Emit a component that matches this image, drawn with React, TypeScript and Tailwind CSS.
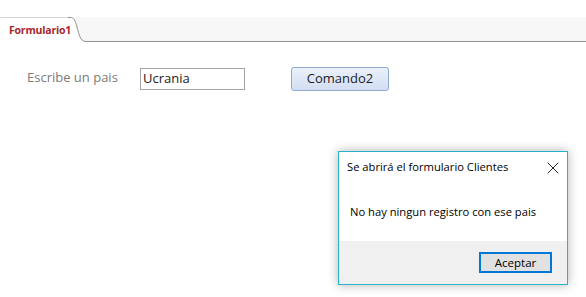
import { X } from 'lucide-react'

const ui = { fontFamily: '"Segoe UI", "Open Sans", "Noto Sans", sans-serif' }

export default function App() {
  return (
    <div className="relative w-[586px] h-[297px] bg-white overflow-hidden" style={ui}>
      <div className="h-[17px]" />
      {/* tab strip */}
      <div className="flex h-[25px] bg-[#f7f7f7]">
        <div className="flex items-center pl-[9px] w-[68px] bg-white border-t border-[#d4d4d4] rounded-tl-[2px] overflow-visible">
          <span className="relative z-10 text-[10.5px] font-bold text-[#a4262c] leading-none whitespace-nowrap tracking-[-0.2px]">Formulario1</span>
        </div>
        <svg width="20" height="25" viewBox="0 0 20 25" className="shrink-0">
          <path d="M0 0.5 H2 C6 0.5 7 3 9 10 C11 17 12 24.5 18 24.5 H20 V25 H0 Z" fill="#ffffff" />
          <path d="M0 0.5 H2 C6 0.5 7 3 9 10 C11 17 12 24.5 18 24.5 H20" fill="none" stroke="#8f8f8f" strokeWidth="1" />
        </svg>
        <div className="flex-1 border-b border-[#8f8f8f]" />
      </div>

      {/* form body */}
      <div className="flex items-center pt-[25px] pl-[27px]">
        <span className="w-[113px] text-[13px] text-[#7b7b7b] -mt-[3px]">Escribe un pais</span>
        <div className="w-[105px] h-[22px] border border-[#a5a5a5] flex items-center px-[2px] text-[13px] text-[#222]">
          Ucrania
        </div>
        <button className="ml-[46px] w-[98px] h-[24px] rounded-[3px] border border-[#8eaad2] bg-gradient-to-b from-[#eaf1fb] to-[#d2def2] text-[13px] text-[#1e1e1e] flex items-center justify-center">
          Comando2
        </button>
      </div>

      {/* message box */}
      <div className="absolute left-[338px] top-[151px] w-[230px] h-[134px] border border-[#27b4c9] bg-white shadow-[0_0_10px_rgba(0,0,0,0.3)] flex flex-col">
        <div className="flex items-center justify-between h-[30px] pl-[8px] pr-[4px] pt-[1px]">
          <span className="text-[11.2px] text-black">Se abrirá el formulario Clientes</span>
          <X className="w-[20px] h-[20px] text-[#111]" strokeWidth={1.1} />
        </div>
        <div className="flex-1 flex items-center pl-[11px] pt-[2px] text-[11.2px] text-black">
          No hay ningun registro con ese pais
        </div>
        <div className="h-[43px] bg-[#f0f0f0] flex items-center justify-end pr-[15px]">
          <button className="w-[73px] h-[21px] border-2 border-[#0078d7] bg-[#e1e1e1] text-[11.5px] text-black flex items-center justify-center">
            Aceptar
          </button>
        </div>
      </div>
    </div>
  )
}
